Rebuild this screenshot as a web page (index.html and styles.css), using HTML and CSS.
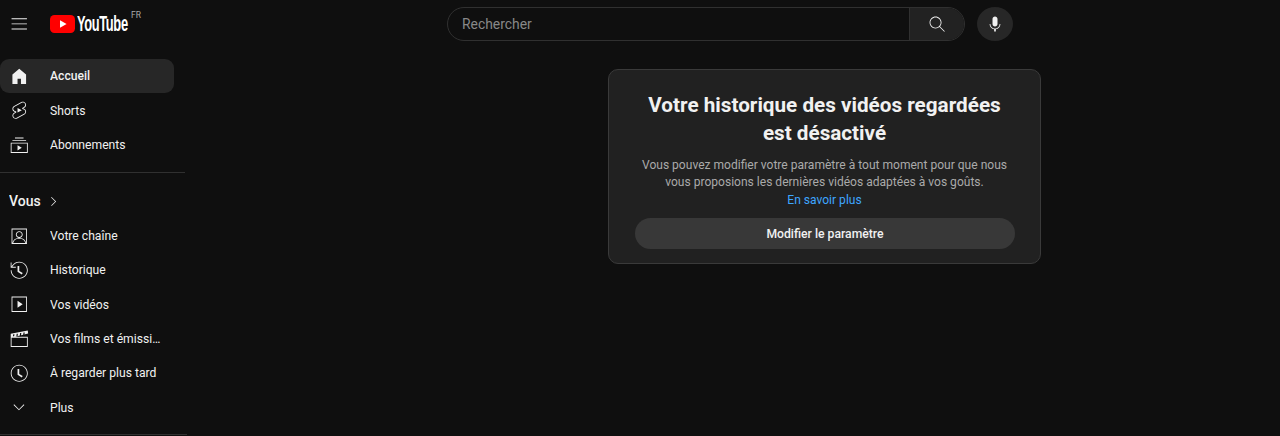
FILE: index.html
```html
<!DOCTYPE html>
<html lang="fr">
<head>
<meta charset="utf-8">
<title>Historique - YouTube</title>
<link rel="stylesheet" href="styles.css">
</head>
<body>
<header class="topbar">
  <div class="brand">
    <svg class="icon menu-icon" viewBox="0 0 24 24"><path d="M21 6H3V5h18v1zm0 5H3v1h18v-1zm0 6H3v1h18v-1z"/></svg>
    <svg class="yt-mark" viewBox="0 0 25 18"><rect width="25" height="18" rx="4.5" fill="#f00"/><path d="M10 5.2v7.6l6.6-3.8z" fill="#fff"/></svg>
    <span class="yt-word">YouTube</span>
    <span class="yt-country">FR</span>
  </div>
  <div class="search">
    <div class="search-input">Rechercher</div>
    <div class="search-btn"><svg class="icon" viewBox="0 0 24 24"><path d="m20.87 20.17-5.59-5.59C16.35 13.35 17 11.75 17 10c0-3.87-3.13-7-7-7s-7 3.13-7 7 3.13 7 7 7c1.75 0 3.35-.65 4.58-1.71l5.59 5.59.7-.71zM10 16c-3.31 0-6-2.69-6-6s2.69-6 6-6 6 2.69 6 6-2.69 6-6 6z"/></svg></div>
  </div>
  <div class="mic"><svg class="icon" viewBox="0 0 24 24"><path d="M12 3C10.34 3 9 4.37 9 6.07v5.86C9 13.63 10.34 15 12 15s3-1.37 3-3.07V6.07C15 4.37 13.66 3 12 3zm6.5 9h-1c0 3.03-2.47 5.5-5.5 5.5S6.5 15.03 6.5 12h-1c0 3.24 2.39 5.93 5.5 6.41V21h2v-2.59c3.11-.48 5.5-3.17 5.5-6.41z"/></svg></div>
</header>
<div class="layout">
  <nav class="sidebar">
    <a class="row active"><svg class="icon" viewBox="0 0 24 24"><path d="M4 21V10.08l8-6.96 8 6.96V21h-6v-6h-4v6H4z"/></svg><span>Accueil</span></a>
    <a class="row"><svg class="icon" viewBox="0 0 24 24"><path d="M10 14.65v-5.3L15 12l-5 2.65zm7.77-4.33-1.2-.5L18 9.06c1.84-.96 2.53-3.23 1.56-5.06s-3.24-2.53-5.07-1.56L6 6.94c-1.29.68-2.07 2.04-2 3.49.07 1.42.93 2.67 2.22 3.25.03.01 1.2.5 1.2.5L6 14.93c-1.83.97-2.53 3.24-1.56 5.07.97 1.83 3.24 2.53 5.07 1.56l8.5-4.5c1.29-.68 2.06-2.04 1.99-3.49-.07-1.42-.94-2.68-2.23-3.25zm-.23 5.86-8.5 4.5c-1.34.71-3.01.2-3.72-1.14-.71-1.34-.2-3.01 1.14-3.72l2.04-1.08v-1.21l-.69-.28-1.11-.46c-.99-.41-1.65-1.35-1.7-2.41-.05-1.06.52-2.06 1.46-2.56l8.5-4.5c1.34-.71 3.01-.2 3.72 1.14.71 1.34.2 3.01-1.14 3.72L15.5 9.26v1.21l1.8.74c.99.41 1.65 1.35 1.7 2.41.05 1.06-.52 2.06-1.46 2.56z"/></svg><span>Shorts</span></a>
    <a class="row"><svg class="icon" viewBox="0 0 24 24"><path d="M10 18v-6l5 3-5 3zm7-15H7v1h10V3zm3 3H4v1h16V6zm2 3H2v12h20V9zM3 10h18v10H3V10z"/></svg><span>Abonnements</span></a>
    <hr class="divider">
    <a class="row you"><span>Vous</span><svg class="icon chevron" viewBox="0 0 24 24"><path d="m9.4 18.4-.7-.7 5.6-5.6-5.7-5.7.7-.7 6.4 6.4-6.3 6.3z"/></svg></a>
    <a class="row"><svg class="icon" viewBox="0 0 24 24"><path d="M3,3v18h18V3H3z M4.99,20c0.39-2.62,2.38-5.1,7.01-5.1s6.62,2.48,7.01,5.1H4.99z M9,10c0-1.65,1.35-3,3-3s3,1.35,3,3 c0,1.65-1.35,3-3,3S9,11.65,9,10z M12.72,13.93C14.58,13.59,16,11.96,16,10c0-2.21-1.79-4-4-4c-2.21,0-4,1.79-4,4 c0,1.96,1.42,3.59,3.28,3.93c-4.42,0.25-6.84,2.8-7.28,6V4h16v15.93C19.56,16.73,17.14,14.18,12.72,13.93z"/></svg><span>Votre chaîne</span></a>
    <a class="row"><svg class="icon" viewBox="0 0 24 24"><path d="M14.97 16.95 10 13.87V7h2v5.76l4.03 2.49-1.06 1.7zM22 12c0 5.51-4.49 10-10 10S2 17.51 2 12h1c0 4.96 4.04 9 9 9s9-4.04 9-9-4.04-9-9-9C8.81 3 5.92 4.64 4.28 7.38c-.11.18-.22.37-.31.56L3.94 8H8v1H1.96V3h1v4.74c.04-.09.07-.17.11-.25.11-.22.23-.42.35-.63C5.22 3.86 8.51 2 12 2c5.51 0 10 4.49 10 10z"/></svg><span>Historique</span></a>
    <a class="row"><svg class="icon" viewBox="0 0 24 24"><path d="M10 8l6 4-6 4V8zm11-5v18H3V3h18zm-1 1H4v16h16V4z"/></svg><span>Vos vidéos</span></a>
    <a class="row"><svg class="icon" viewBox="0 0 24 24"><path d="M22 1.7 2 5.6V21h20V9.2H7.2L22.4 5.2zM21 20H3v-9.8h18z"/><path d="M5 6.2h1.4l-.4 2.4H4.6zM9 5.5h1.4L10 8.6H8.6zM13 4.8h1.4l-.4 3.8h-1.4zM17 4.1h1.4L18 7H16.6z" fill="#0f0f0f"/></svg><span>Vos films et émissions</span></a>
    <a class="row"><svg class="icon" viewBox="0 0 24 24"><path d="M14.97 16.95 10 13.87V7h2v5.76l4.03 2.49-1.06 1.7zM12 3c-4.96 0-9 4.04-9 9s4.04 9 9 9 9-4.04 9-9-4.04-9-9-9m0-1c5.52 0 10 4.48 10 10s-4.48 10-10 10S2 17.52 2 12 6.48 2 12 2z"/></svg><span>À regarder plus tard</span></a>
    <a class="row"><svg class="icon" viewBox="0 0 24 24"><path d="m18 9.28-6.35 6.35-6.35-6.35.7-.7 5.65 5.65 5.65-5.65z"/></svg><span>Plus</span></a>
    <hr class="divider last">
  </nav>
  <main class="content">
    <section class="card">
      <h1>Votre historique des vidéos regardées est désactivé</h1>
      <p>Vous pouvez modifier votre paramètre à tout moment pour que nous vous proposions les dernières vidéos adaptées à vos goûts.<br><a class="link">En savoir plus</a></p>
      <button class="setting-btn">Modifier le paramètre</button>
    </section>
  </main>
</div>
</body>
</html>
```
FILE: styles.css
```css
* { box-sizing: border-box; }
html, body { height: 100%; }
body {
  margin: 0;
  background: #0f0f0f;
  color: #f1f1f1;
  font-family: Roboto, "Liberation Sans", sans-serif;
  overflow: hidden;
}
.icon { width: 20.5px; height: 20.5px; fill: currentColor; flex: none; display: block; }

.topbar { height: 48px; display: flex; align-items: center; }
.brand { width: 447px; flex: none; display: flex; align-items: center; padding-left: 9px; position: relative; }
.menu-icon { margin-right: 20.5px; }
.yt-mark { width: 25px; height: 18px; flex: none; }
.yt-word {
  font: 700 22px/22px "Liberation Sans", sans-serif;
  letter-spacing: -0.6px;
  margin-left: 2px;
  width: 54px;
  color: #fff;
  display: block;
  transform: scaleX(.585);
  transform-origin: left center;
  white-space: nowrap;
}
.yt-country { position: absolute; left: 131px; top: -3px; font-size: 8.5px; line-height: 10px; color: #aaa; }

.search { width: 518px; height: 34px; flex: none; display: flex; border: 1px solid #303030; border-radius: 17px; overflow: hidden; }
.search-input { flex: 1; padding-left: 14px; font-size: 13.9px; line-height: 32px; color: #888; }
.search-btn { width: 55px; flex: none; background: #222; border-left: 1px solid #303030; display: flex; align-items: center; justify-content: center; }
.mic { width: 36px; height: 34px; margin-left: 12px; border-radius: 50%; background: #272727; display: flex; align-items: center; justify-content: center; }
.mic .icon { width: 20px; height: 20px; }

.layout { display: flex; }
.sidebar { width: 187px; flex: none; padding-top: 11px; }
.row { display: flex; align-items: center; width: 174px; height: 34.4px; padding-left: 9px; font-size: 12.15px; color: #f1f1f1; border-radius: 9px; }
.row .icon { margin-right: 20.5px; }
.row span { white-space: nowrap; overflow: hidden; text-overflow: ellipsis; width: 111px; }
.row.active { background: #272727; font-weight: 500; }
.you { font-size: 14px; font-weight: 500; }
.you span { width: auto; margin-right: 1px; }
.you .chevron { width: 17px; height: 17px; margin: 0 0 0 3px; }
.divider { height: 1px; margin: 10px 2px 11px 0; border: 0; background: #303030; }
.divider.last { margin: 9px 0 0; }

.content { flex: 1; padding: 21px 0 0 421px; }
.card { width: 433px; height: 195px; background: #212121; border: 1px solid #3a3a3a; border-radius: 10px; padding: 21px 26px 0; text-align: center; }
.card h1 { margin: 0 auto; width: 370px; font-size: 20.7px; line-height: 28px; font-weight: 700; color: #f1f1f1; }
.card p { margin: 10px 0 0; font-size: 12.05px; line-height: 17.4px; color: #aaa; }
.link { color: #3ea6ff; }
.setting-btn { display: block; width: 380px; height: 31px; margin-top: 9px; border: 0; border-radius: 16px; background: #383838; color: #f1f1f1; font: 500 12.2px/31px Roboto, sans-serif; }
```
